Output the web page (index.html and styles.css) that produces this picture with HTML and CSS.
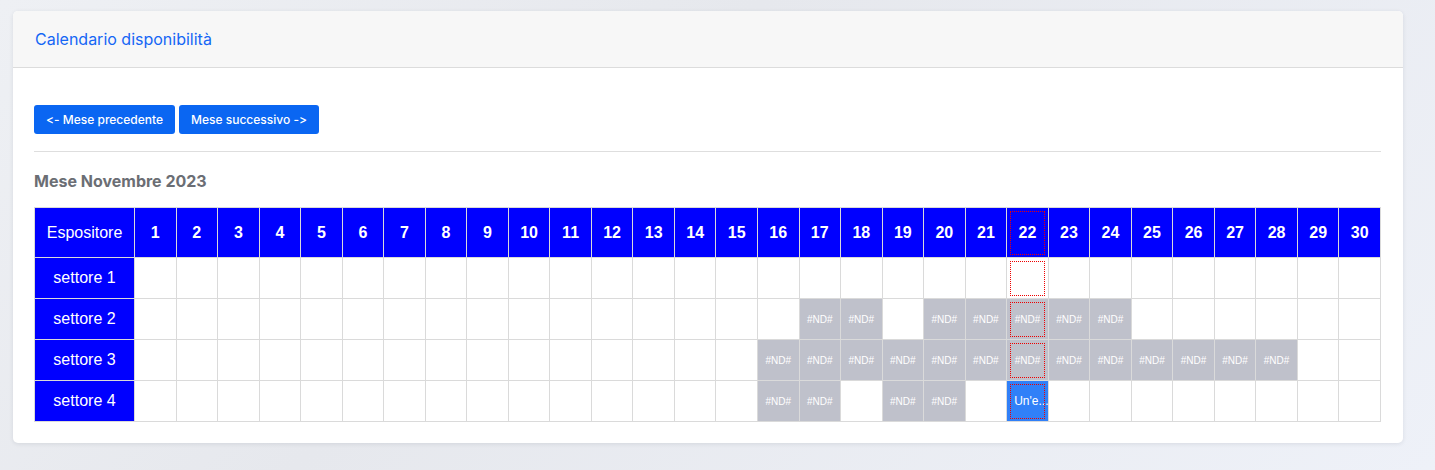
FILE: index.html
```html
<!DOCTYPE html>
<html lang="it">
<head>
<meta charset="utf-8">
<title>Calendario disponibilità</title>
<link rel="stylesheet" href="styles.css">
</head>
<body>
<div class="card">
  <div class="card-header">Calendario disponibilità</div>
  <div class="card-body">
    <div class="nav">
      <button class="btn">&lt;- Mese precedente</button>
      <button class="btn">Mese successivo -&gt;</button>
    </div>
    <hr class="sep">
    <h5 class="month">Mese Novembre 2023</h5>
    <table class="cal">
      <thead>
        <tr>
          <th class="name">Espositore</th>
          <th>1</th><th>2</th><th>3</th><th>4</th><th>5</th><th>6</th><th>7</th><th>8</th><th>9</th><th>10</th>
          <th>11</th><th>12</th><th>13</th><th>14</th><th>15</th><th>16</th><th>17</th><th>18</th><th>19</th><th>20</th>
          <th>21</th><th class="today">22</th><th>23</th><th>24</th><th>25</th><th>26</th><th>27</th><th>28</th><th>29</th><th>30</th>
        </tr>
      </thead>
      <tbody>
        <tr>
          <td class="name">settore 1</td>
          <td></td><td></td><td></td><td></td><td></td><td></td><td></td><td></td><td></td><td></td>
          <td></td><td></td><td></td><td></td><td></td><td></td><td></td><td></td><td></td><td></td>
          <td></td><td class="today"></td><td></td><td></td><td></td><td></td><td></td><td></td><td></td><td></td>
        </tr>
        <tr>
          <td class="name">settore 2</td>
          <td></td><td></td><td></td><td></td><td></td><td></td><td></td><td></td><td></td><td></td>
          <td></td><td></td><td></td><td></td><td></td><td></td><td class="nd">#ND#</td><td class="nd">#ND#</td><td></td><td class="nd">#ND#</td>
          <td class="nd">#ND#</td><td class="nd today">#ND#</td><td class="nd">#ND#</td><td class="nd">#ND#</td><td></td><td></td><td></td><td></td><td></td><td></td>
        </tr>
        <tr>
          <td class="name">settore 3</td>
          <td></td><td></td><td></td><td></td><td></td><td></td><td></td><td></td><td></td><td></td>
          <td></td><td></td><td></td><td></td><td></td><td class="nd">#ND#</td><td class="nd">#ND#</td><td class="nd">#ND#</td><td class="nd">#ND#</td><td class="nd">#ND#</td>
          <td class="nd">#ND#</td><td class="nd today">#ND#</td><td class="nd">#ND#</td><td class="nd">#ND#</td><td class="nd">#ND#</td><td class="nd">#ND#</td><td class="nd">#ND#</td><td class="nd">#ND#</td><td></td><td></td>
        </tr>
        <tr>
          <td class="name">settore 4</td>
          <td></td><td></td><td></td><td></td><td></td><td></td><td></td><td></td><td></td><td></td>
          <td></td><td></td><td></td><td></td><td></td><td class="nd">#ND#</td><td class="nd">#ND#</td><td></td><td class="nd">#ND#</td><td class="nd">#ND#</td>
          <td></td><td class="ev today"><span class="ev-txt">Un'e...</span></td><td></td><td></td><td></td><td></td><td></td><td></td><td></td><td></td>
        </tr>
      </tbody>
    </table>
  </div>
</div>
</body>
</html>
```

FILE: styles.css
```css
html, body {
  margin: 0;
  padding: 0;
}
body {
  background: linear-gradient(135deg, #eef0f4 0%, #e6e8ed 40%, #eef1f8 100%);
  min-height: 470px;
  padding: 11px 32px 0 13px;
  box-sizing: border-box;
  font-family: Inter, "Noto Sans", sans-serif;
  font-variant-ligatures: none;
  font-feature-settings: "calt" 0, "liga" 0;
}
.card {
  background: #fff;
  border-radius: 5px;
  box-shadow: 0 1px 4px rgba(30, 40, 60, 0.10);
  overflow: hidden;
  width: 1390px;
}
.card-header {
  background: #f7f7f7;
  border-bottom: 1px solid #dcdcdc;
  height: 57px;
  box-sizing: border-box;
  padding: 0 22px;
  display: flex;
  align-items: center;
  color: #1566f5;
  font-size: 16px;
  font-weight: 400;
}
.card-body {
  padding: 37px 22px 21px 21px;
}
.nav {
  display: flex;
  gap: 4px;
}
.btn {
  background: #0a66f2;
  color: #fff;
  border: 0;
  border-radius: 3px;
  height: 29px;
  padding: 0 12px;
  font-family: Inter, "Noto Sans", sans-serif;
  font-variant-ligatures: none;
  font-feature-settings: "calt" 0, "liga" 0;
  font-size: 12px;
  font-weight: 500;
}
.sep {
  border: 0;
  border-top: 1px solid #dedede;
  margin: 17px 0 0 0;
}
.month {
  margin: 20px 0 0 0;
  font-size: 16px;
  font-weight: 700;
  color: #6b6e74;
  line-height: 18px;
  height: 35px;
}
.cal {
  border-collapse: collapse;
  width: 1347px;
  table-layout: fixed;
  font-family: "Liberation Sans", Arial, sans-serif;
}
.cal th, .cal td {
  border: 1px solid #dadada;
  text-align: center;
  padding: 0;
}
.cal th {
  background: #0000ff;
  color: #fff;
  font-size: 16px;
  font-weight: 700;
  height: 49px;
}
.cal th.name {
  width: 99px;
  font-weight: 400;
}
.cal td {
  height: 40px;
  background: #fff;
  font-size: 10px;
  color: #fff;
}
.cal td.name {
  background: #0000ff;
  font-size: 16px;
}
.cal td.nd {
  background: #bfc1cb;
}
.cal .today {
  outline: 1px dotted #ee0000;
  outline-offset: -4px;
}
.cal td.ev {
  background: #3080f8;
  font-size: 12px;
}
.ev-txt {
  display: block;
  white-space: nowrap;
  padding-left: 7px;
  text-align: left;
}
```
